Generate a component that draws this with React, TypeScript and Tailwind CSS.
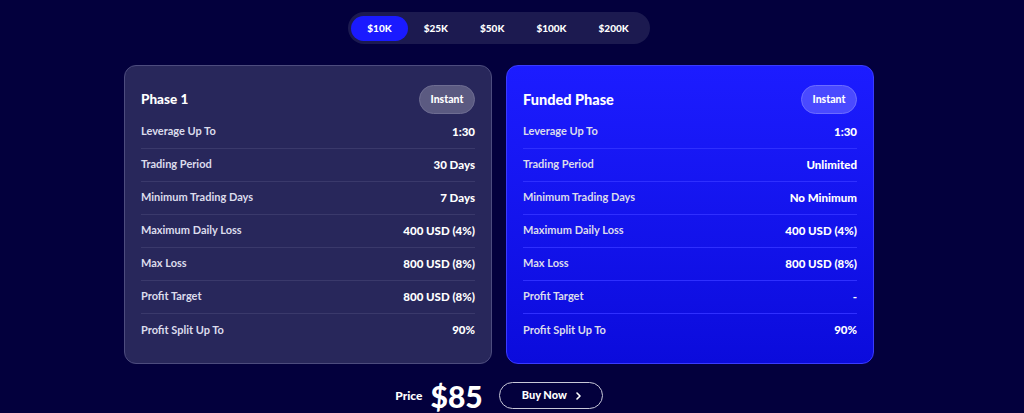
import React, { useState } from 'react';

const tabs = ['$10K', '$25K', '$50K', '$100K', '$200K'];

const phase1 = [
  ['Leverage Up To', '1:30'],
  ['Trading Period', '30 Days'],
  ['Minimum Trading Days', '7 Days'],
  ['Maximum Daily Loss', '400 USD (4%)'],
  ['Max Loss', '800 USD (8%)'],
  ['Profit Target', '800 USD (8%)'],
  ['Profit Split Up To', '90%'],
];

const funded = [
  ['Leverage Up To', '1:30'],
  ['Trading Period', 'Unlimited'],
  ['Minimum Trading Days', 'No Minimum'],
  ['Maximum Daily Loss', '400 USD (4%)'],
  ['Max Loss', '800 USD (8%)'],
  ['Profit Target', '-'],
  ['Profit Split Up To', '90%'],
];

const PhaseCard = ({ title, rows, highlight }: { title: string; rows: string[][]; highlight?: boolean }) => (
  <div
    className={`w-[368px] rounded-[12px] border px-[16px] pt-[19px] pb-[16px] ${
      highlight
        ? 'bg-gradient-to-b from-[#1c1cff] to-[#0b0bdc] border-[#3b3bff]'
        : 'bg-[#28275b] border-[#4d4c7e]'
    }`}
  >
    <div className="flex h-[29px] items-center justify-between">
      <div className={`${highlight ? 'text-[14.5px]' : 'text-[13.5px]'} font-black text-white`}>{title}</div>
      <div
        className={`flex h-[29px] w-[56px] items-center justify-center rounded-full border text-[10.5px] font-black text-white ${
          highlight ? 'bg-[#4a4aff] border-[#6c6cff]' : 'bg-[#5b5a81] border-[#6e6d92]'
        }`}
      >
        Instant
      </div>
    </div>
    <div className="pt-[1.5px]">
      {rows.map(([label, value], i) => (
        <div
          key={label}
          className={`flex h-[33px] items-center justify-between ${
            i < rows.length - 1 ? (highlight ? 'border-b border-[#2f2fff]' : 'border-b border-[#3a396b]') : ''
          }`}
        >
          <span className="text-[11px] font-bold text-[#dcdcec]">{label}</span>
          <span className="text-[11.5px] font-black text-white">{value}</span>
        </div>
      ))}
    </div>
  </div>
);

export default function App() {
  const [active, setActive] = useState(0);
  return (
    <div className="h-[413px] w-full overflow-hidden bg-[#03003d] pr-[26px] font-['Lato',sans-serif]">
      <div className="flex flex-col items-center pt-[12px]">
        <div className="flex h-[32px] items-center rounded-full bg-[#1c1a50] pl-[3px] pr-[5px]">
          {tabs.map((t, i) => (
            <button
              key={t}
              onClick={() => setActive(i)}
              className={`h-[25px] rounded-full px-[16px] text-[10px] font-black text-white ${
                active === i ? 'bg-[#1a1aff]' : ''
              }`}
            >
              {t}
            </button>
          ))}
        </div>

        <div className="mt-[21px] flex gap-[14px]">
          <PhaseCard title="Phase 1" rows={phase1} />
          <PhaseCard title="Funded Phase" rows={funded} highlight />
        </div>

        <div className="mt-[17px] flex h-[30px] items-center">
          <span className="text-[12px] font-black text-white">Price</span>
          <span className="ml-[8px] text-[30px] font-black leading-[30px] text-white">$85</span>
          <button className="ml-[16px] flex h-[27px] w-[104px] items-center rounded-full border border-[#c8c8d8] pl-[22px] text-[11px] font-black text-white">
            Buy Now
            <svg className="ml-[8px]" width="7" height="8" viewBox="0 0 7 8" fill="none">
              <path d="M2 1l3 3-3 3" stroke="white" strokeWidth="1.6" strokeLinecap="round" strokeLinejoin="round" />
            </svg>
          </button>
        </div>
      </div>
    </div>
  );
}
